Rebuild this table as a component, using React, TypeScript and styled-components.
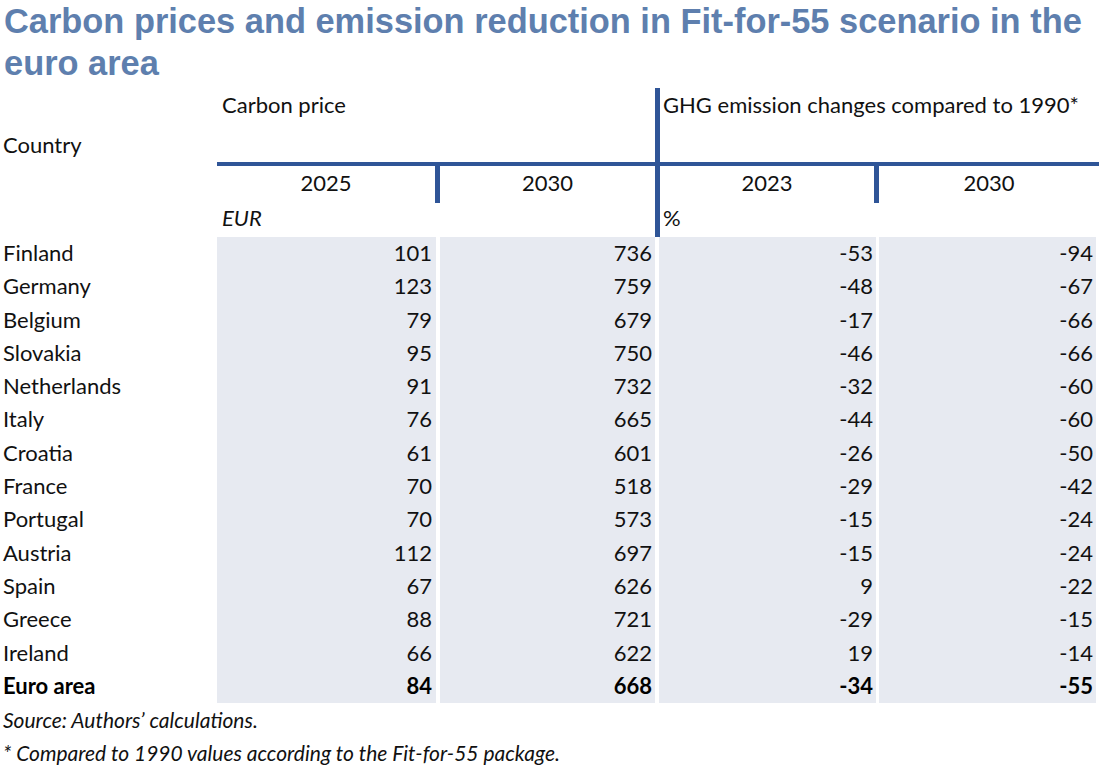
import React from "react";
import styled, { createGlobalStyle } from "styled-components";

const GlobalStyle = createGlobalStyle`
  body {
    margin: 0;
    background: #ffffff;
    font-family: Lato, "Open Sans", sans-serif;
    color: #111111;
  }
`;

const BLUE = "#2f5597";
const SHADE = "#e7eaf1";
const COLS = "217px 223px 215px 224px 220px";

const Page = styled.div`
  width: 1110px;
  height: 766px;
  overflow: hidden;
`;

const Title = styled.h1`
  margin: 0;
  padding-left: 4px;
  width: 1100px;
  height: 84px;
  font-family: "Liberation Sans", Arial, sans-serif;
  font-weight: 700;
  font-size: 34.4px;
  line-height: 42px;
  color: #5e7fae;
`;

const HeadGrid = styled.div`
  display: grid;
  grid-template-columns: ${COLS};
  grid-template-rows: 82px 37px 34px;
  font-size: 22px;
`;

const CountryHead = styled.div`
  grid-column: 1;
  grid-row: 1;
  align-self: end;
  padding: 0 0 8px 3px;
  line-height: 26px;
`;

const GroupHead = styled.div<{ $start: number; $rule?: boolean }>`
  grid-column: ${(p) => p.$start} / span 2;
  grid-row: 1;
  margin-top: ${(p) => (p.$rule ? "4px" : "0")};
  padding: ${(p) => (p.$rule ? "4px 0 0 3px" : "8px 0 0 5px")};
  line-height: 26px;
  border-bottom: 4px solid ${BLUE};
  border-left: ${(p) => (p.$rule ? `5px solid ${BLUE}` : "none")};
`;

const YearCell = styled.div<{ $col: number; $left?: boolean; $right?: boolean }>`
  grid-column: ${(p) => p.$col};
  grid-row: 2;
  display: flex;
  align-items: center;
  justify-content: center;
  padding-bottom: 4px;
  border-left: ${(p) => (p.$left ? `5px solid ${BLUE}` : "none")};
  border-right: ${(p) => (p.$right ? `5px solid ${BLUE}` : "none")};
`;

const UnitCell = styled.div<{ $col: number; $rule?: boolean }>`
  grid-column: ${(p) => p.$col} / span 2;
  grid-row: 3;
  display: flex;
  align-items: center;
  padding-left: ${(p) => (p.$rule ? "3px" : "5px")};
  padding-bottom: 5px;
  font-style: ${(p) => (p.$rule ? "normal" : "italic")};
  border-left: ${(p) => (p.$rule ? `5px solid ${BLUE}` : "none")};
`;

const Row = styled.div<{ $bold?: boolean }>`
  display: grid;
  grid-template-columns: ${COLS};
  height: 33.3px;
  font-size: 22px;
  line-height: 32px;
  font-weight: ${(p) => (p.$bold ? 700 : 400)};
  color: ${(p) => (p.$bold ? "#000" : "#111")};
`;

const Name = styled.div`
  padding-left: 3px;
  white-space: nowrap;
`;

const Value = styled.div<{ $gapLeft?: number; $gapRight?: number; $pad?: number }>`
  background: ${SHADE};
  background-clip: padding-box;
  text-align: right;
  padding-right: ${(p) => p.$pad ?? 3}px;
  border-left: ${(p) => p.$gapLeft ?? 0}px solid #fff;
  border-right: ${(p) => p.$gapRight ?? 0}px solid #fff;
`;

const Notes = styled.div`
  font-size: 21px;
  font-style: italic;
  line-height: 33px;
  padding-left: 3px;
  color: #111;
`;

const data: [string, number, number, number, number][] = [
  ["Finland", 101, 736, -53, -94],
  ["Germany", 123, 759, -48, -67],
  ["Belgium", 79, 679, -17, -66],
  ["Slovakia", 95, 750, -46, -66],
  ["Netherlands", 91, 732, -32, -60],
  ["Italy", 76, 665, -44, -60],
  ["Croatia", 61, 601, -26, -50],
  ["France", 70, 518, -29, -42],
  ["Portugal", 70, 573, -15, -24],
  ["Austria", 112, 697, -15, -24],
  ["Spain", 67, 626, 9, -22],
  ["Greece", 88, 721, -29, -15],
  ["Ireland", 66, 622, 19, -14],
  ["Euro area", 84, 668, -34, -55],
];

export default function App() {
  return (
    <Page>
      <GlobalStyle />
      <Title>
        Carbon prices and emission reduction in Fit-for-55 scenario in the euro area
      </Title>
      <HeadGrid>
        <CountryHead>Country</CountryHead>
        <GroupHead $start={2}>Carbon price</GroupHead>
        <GroupHead $start={4} $rule>
          GHG emission changes compared to 1990*
        </GroupHead>
        <YearCell $col={2} $right>
          2025
        </YearCell>
        <YearCell $col={3}>2030</YearCell>
        <YearCell $col={4} $left $right>
          2023
        </YearCell>
        <YearCell $col={5}>2030</YearCell>
        <UnitCell $col={2}>EUR</UnitCell>
        <UnitCell $col={4} $rule>
          %
        </UnitCell>
      </HeadGrid>
      {data.map(([name, a, b, c, d], i) => (
        <Row key={name} $bold={i === data.length - 1}>
          <Name>{name}</Name>
          <Value $gapRight={4} $pad={4}>
            {a}
          </Value>
          <Value>{b}</Value>
          <Value $gapLeft={4} $gapRight={3}>
            {c}
          </Value>
          <Value $gapRight={3}>{d}</Value>
        </Row>
      ))}
      <Notes>
        Source: Authors’ calculations.
        <br />* Compared to 1990 values according to the Fit-for-55 package.
      </Notes>
    </Page>
  );
}
